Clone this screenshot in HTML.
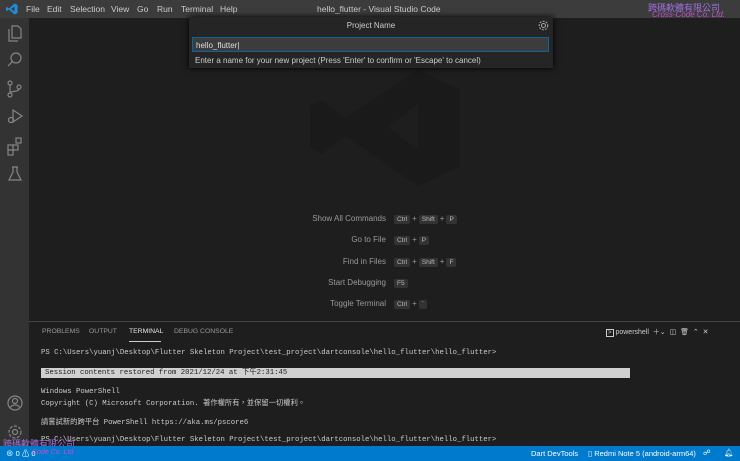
<!DOCTYPE html>
<html><head><meta charset="utf-8"><style>
*{margin:0;padding:0;box-sizing:border-box}
body{width:740px;height:461px;overflow:hidden;background:#1e1e1e;font-family:"Liberation Sans","Noto Sans CJK TC",sans-serif;position:relative;color:#ccc}
.abs{position:absolute}
#title{left:0;top:0;width:740px;height:18px;background:#3c3c3c;font-size:8.5px;color:#ccc}
#title span{position:absolute;top:4px}
#act{left:0;top:18px;width:29px;height:428px;background:#333}
#qi{left:189px;top:17px;width:364px;height:51px;background:#252526;box-shadow:0 0 6px #000}
.mono{font-family:"Liberation Mono","Noto Sans CJK TC",monospace;font-size:7.3px;color:#ccc;white-space:pre}
.key{display:inline-block;background:#333;border-radius:2px;padding:1px 3px;font-size:6.5px;color:#bbb;margin:0 2px}
.kr{position:absolute;font-size:8px;color:#999;width:400px}
.kr b{font-weight:normal;display:inline-block;width:96px;text-align:right;margin-right:6px}
#status{left:0;top:446px;width:740px;height:15px;background:#007acc;color:#fff;font-size:7.5px}
.tab{position:absolute;top:328px;font-size:6.8px;color:#999}
</style></head><body>
<div id="title" class="abs">
<svg class="abs" style="left:6px;top:3px" width="12" height="12" viewBox="0 0 12 12"><path d="M8.5 0.5L11.5 2v8l-3 1.5L3 6.5 1 8 0 7.5v-3L1 4l2 1.5z" fill="#1e8fd8"/><path d="M8.5 3.5v5L5 6z" fill="#3c3c3c"/></svg>
<span style="left:26px">File</span><span style="left:47px">Edit</span><span style="left:70px">Selection</span><span style="left:111px">View</span><span style="left:137px">Go</span><span style="left:157px">Run</span><span style="left:181px">Terminal</span><span style="left:220px">Help</span>
<span style="left:317px">hello_flutter - Visual Studio Code</span>
<span style="left:648px;top:1px;color:#a070e0;font-size:9px">跨碼軟體有限公司</span>
<span style="left:652px;top:10px;color:#c050d0;font-size:8px;font-style:italic">Cross-Code Co. Ltd.</span>
</div>
<div id="act" class="abs">
<svg class="abs" style="left:6px;top:6px" width="18" height="160" viewBox="0 0 18 160" fill="none" stroke="#858585" stroke-width="1.2">
<path d="M6 2h6l3 3v9H6z M3 5v12h9"/>
<circle cx="10" cy="34" r="5"/><path d="M6.5 37.5L2 42"/>
<circle cx="4" cy="59" r="2"/><circle cx="4" cy="71" r="2"/><circle cx="13" cy="63" r="2"/><path d="M4 61v8M13 65c0 3-9 2-9 4"/>
<path d="M7 86l9 6-9 6z"/><circle cx="5" cy="96" r="2.5"/>
<rect x="2" y="121" width="5" height="5"/><rect x="7" y="121" width="5" height="5"/><rect x="2" y="126" width="5" height="5"/><rect x="10" y="114" width="5" height="5"/>
<path d="M7 143v5l-4 8h12l-4-8v-5M6 143h6"/>
</svg>
<svg class="abs" style="left:6px;top:377px" width="18" height="50" viewBox="0 0 18 50" fill="none" stroke="#858585" stroke-width="1.2">
<circle cx="9" cy="8" r="7"/><circle cx="9" cy="6" r="2.5"/><path d="M4 13c2-4 8-4 10 0"/>
<circle cx="9" cy="37" r="2.5"/><circle cx="9" cy="37" r="6" stroke-dasharray="3 1.5"/>
</svg>
</div>
<svg class="abs" style="left:310px;top:68px" width="150" height="118" viewBox="0 0 150 118"><path d="M108 2l42 20v76l-42 20L35 68 12 86 0 80V38l12-6 23 18z" fill="#1a1a1a"/><path d="M108 36v46L78 59z" fill="#1e1e1e"/></svg>
<div id="qi" class="abs">
<div class="abs" style="left:0;top:4px;width:364px;text-align:center;font-size:8px;color:#ccc">Project Name</div>
<svg class="abs" style="left:349px;top:3px" width="11" height="11" viewBox="0 0 11 11" fill="none" stroke="#aaa" stroke-width="1"><circle cx="5.5" cy="5.5" r="2"/><circle cx="5.5" cy="5.5" r="4.3" stroke-dasharray="2 1.2"/></svg>
<div class="abs" style="left:3px;top:20px;width:357px;height:15px;background:#3c3c3c;border:1px solid #0e639c;font-size:8px;color:#ddd;padding:3px 0 0 3px">hello_flutter|</div>
<div class="abs" style="left:6px;top:39px;font-size:8px;color:#ccc">Enter a name for your new project (Press 'Enter' to confirm or 'Escape' to cancel)</div>
</div>
<div class="kr" style="left:290px;top:214px"><b>Show All Commands</b><span class="key">Ctrl</span>+<span class="key">Shift</span>+<span class="key">P</span></div>
<div class="kr" style="left:290px;top:235px"><b>Go to File</b><span class="key">Ctrl</span>+<span class="key">P</span></div>
<div class="kr" style="left:290px;top:257px"><b>Find in Files</b><span class="key">Ctrl</span>+<span class="key">Shift</span>+<span class="key">F</span></div>
<div class="kr" style="left:290px;top:278px"><b>Start Debugging</b><span class="key">F5</span></div>
<div class="kr" style="left:290px;top:299px"><b>Toggle Terminal</b><span class="key">Ctrl</span>+<span class="key">`</span></div>
<div class="abs" style="left:29px;top:321px;width:711px;height:1px;background:#444"></div>
<span class="tab" style="left:42px">PROBLEMS</span><span class="tab" style="left:89px">OUTPUT</span><span class="tab" style="left:129px;color:#e7e7e7">TERMINAL</span><span class="tab" style="left:174px">DEBUG CONSOLE</span>
<div class="abs" style="left:129px;top:341px;width:32px;height:1px;background:#ccc"></div>
<div class="abs" style="left:606px;top:327px;font-size:7px;color:#ccc"><span style="border:1px solid #ccc;padding:0 1px;font-size:6px">&gt;</span> powershell &nbsp;＋⌄ &nbsp;◫ &nbsp;🗑 &nbsp;⌃ &nbsp;✕</div>
<div class="abs mono" style="left:41px;top:349px">PS C:\Users\yuanj\Desktop\Flutter Skeleton Project\test_project\dartconsole\hello_flutter\hello_flutter&gt;</div>
<div class="abs mono" style="left:41px;top:368px;width:589px;height:10px;background:#d0d0d0;color:#1e1e1e;padding-left:4px;line-height:10px">Session contents restored from 2021/12/24 at 下午2:31:45</div>
<div class="abs mono" style="left:41px;top:388px">Windows PowerShell</div>
<div class="abs mono" style="left:41px;top:398px">Copyright (C) Microsoft Corporation. 著作權所有，並保留一切權利。</div>
<div class="abs mono" style="left:41px;top:417px">請嘗試新的跨平台 PowerShell https://aka.ms/pscore6</div>
<div class="abs mono" style="left:41px;top:436px">PS C:\Users\yuanj\Desktop\Flutter Skeleton Project\test_project\dartconsole\hello_flutter\hello_flutter&gt;</div>
<div class="abs" style="left:3px;top:437px;color:#a070e0;font-size:9px">跨碼軟體有限公司</div>
<div id="status" class="abs">
<span class="abs" style="left:6px;top:2px">⊗ 0 ⚠ 0</span>
<span class="abs" style="left:32px;top:3px;color:#c050d0;font-style:italic;font-size:7px">Code Co. Ltd.</span>
<span class="abs" style="left:531px;top:3px">Dart DevTools</span>
<span class="abs" style="left:588px;top:3px">▯ Redmi Note 5 (android-arm64)</span>
<span class="abs" style="left:703px;top:2px">☍</span><span class="abs" style="left:724px;top:2px">🔔︎</span>
</div>
</body></html>
